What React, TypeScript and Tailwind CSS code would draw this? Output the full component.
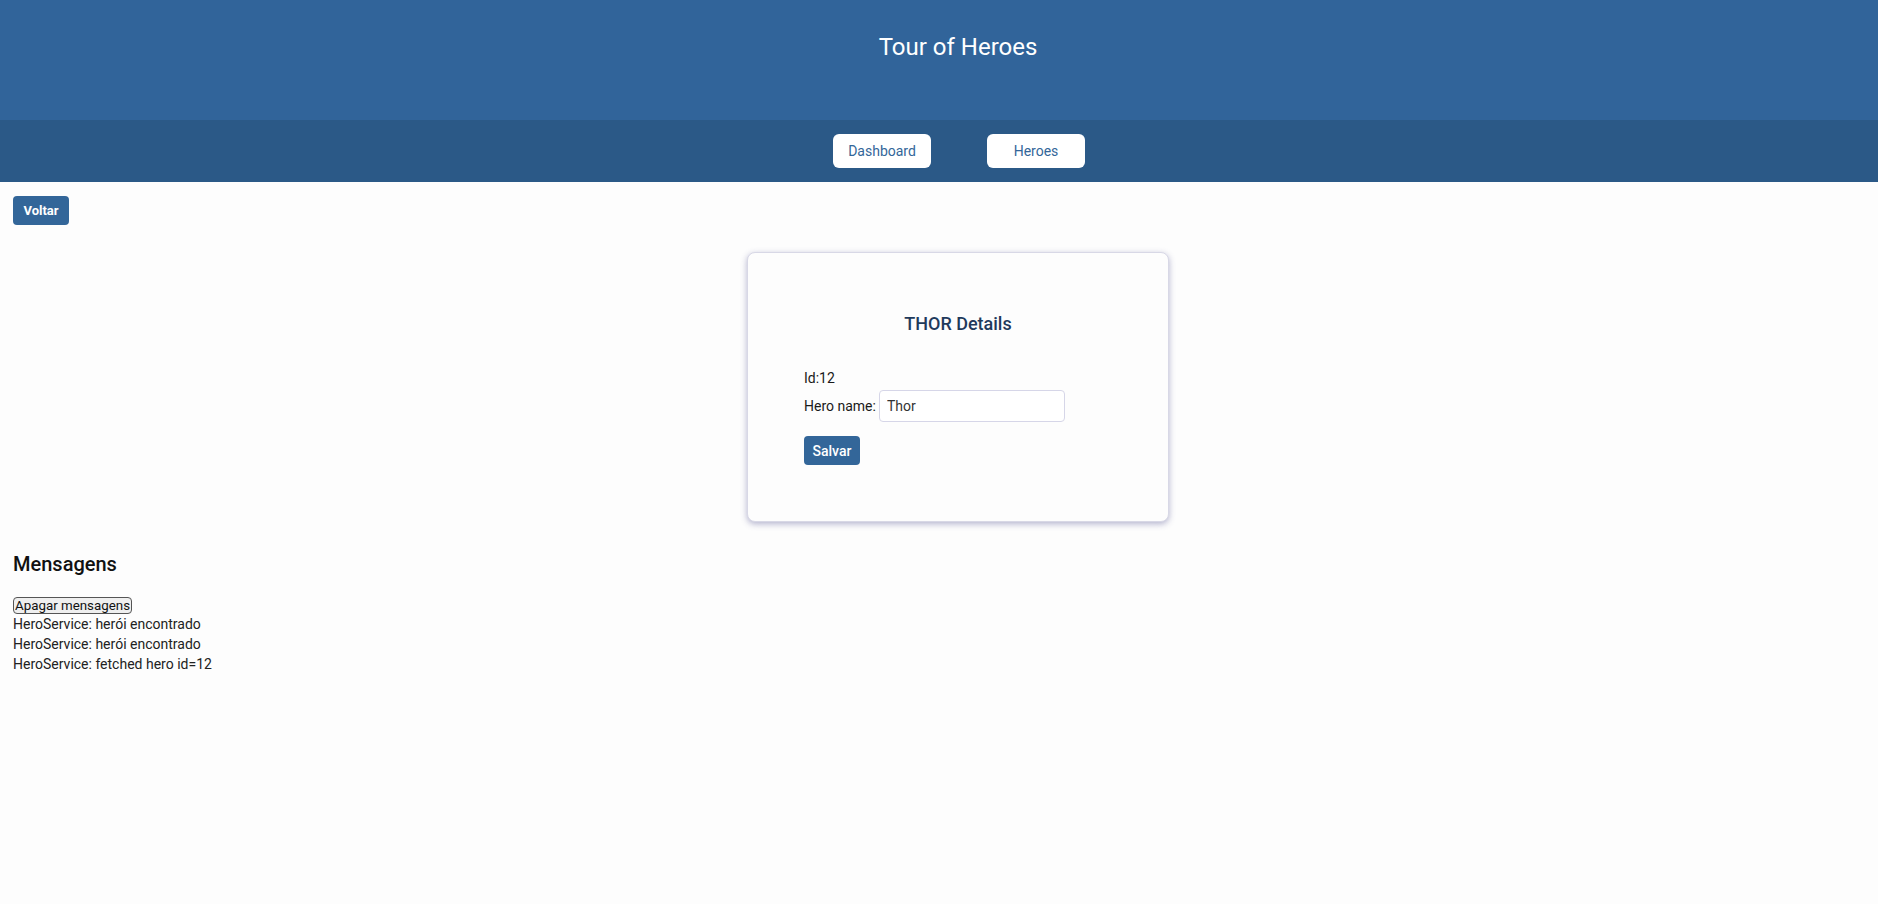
export default function App() {
	const messages = [
		"HeroService: herói encontrado",
		"HeroService: herói encontrado",
		"HeroService: fetched hero id=12",
	];

	return (
		<div className="min-h-[904px] bg-[#fdfdfd] font-['Roboto',sans-serif] text-[#1a1a1a]">
			<header className="h-[120px] bg-[#31649a] pl-[38px] pt-[31px]">
				<h1 className="text-center text-2xl leading-8 text-white">Tour of Heroes</h1>
			</header>
			<nav className="flex h-[62px] justify-center gap-[56px] bg-[#2b5987] pl-[40px] pt-[14px]">
				<a className="flex h-[34px] w-[98px] items-center justify-center rounded-md bg-white text-sm text-[#336699]">
					Dashboard
				</a>
				<a className="flex h-[34px] w-[98px] items-center justify-center rounded-md bg-white text-sm text-[#336699]">
					Heroes
				</a>
			</nav>

			<div className="pl-[13px] pt-[14px]">
				<button className="h-[29px] w-[56px] rounded bg-[#336699] text-[13px] font-bold text-white">
					Voltar
				</button>
			</div>

			<div className="flex justify-center pl-[38px] pt-[27px]">
				<div className="h-[270px] w-[422px] rounded-lg border border-[#d8d8e6] bg-[#fdfdfd] px-[56px] pt-[57px] shadow-[0_2px_6px_rgba(90,90,150,0.45)]">
					<h2 className="text-center text-lg font-medium leading-7 text-[#1f3a5c]">THOR Details</h2>
					<div className="mt-[30px] text-sm leading-5">Id:12</div>
					<div className="mt-[2px] flex items-center text-sm">
						<label className="mr-[3px]">Hero name:</label>
						<input
							defaultValue="Thor"
							className="h-[32px] w-[186px] rounded border border-[#d6d6e8] bg-white px-[7px] text-sm text-[#333] outline-none"
						/>
					</div>
					<button className="mt-[14px] h-[29px] w-[56px] rounded bg-[#336699] text-sm font-medium text-white">
						Salvar
					</button>
				</div>
			</div>

			<div className="px-[13px] pt-[28px]">
				<h2 className="text-xl font-medium leading-7 text-[#111]">Mensagens</h2>
				<button className="mt-[19px] block h-[17px] rounded-sm border border-[#555] bg-[#efefef] px-[1px] text-[13.33px] leading-[15px] text-[#111]">
					Apagar mensagens
				</button>
				{messages.map((m, i) => (
					<div key={i} className="text-sm leading-5 text-[#222]">
						{m}
					</div>
				))}
			</div>
		</div>
	);
}
